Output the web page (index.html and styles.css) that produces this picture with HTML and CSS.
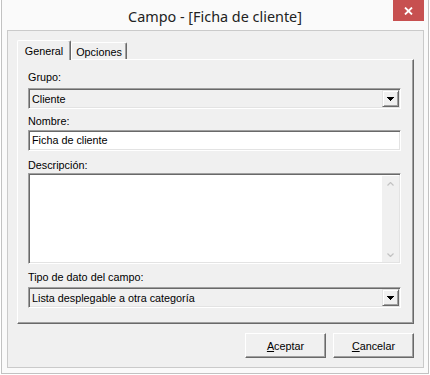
FILE: index.html
```html
<!DOCTYPE html>
<html lang="es">
<head>
  <meta charset="UTF-8" />
  <title>Campo - [Ficha de cliente]</title>
  <link rel="stylesheet" href="styles.css">
</head>
<body>

  <div class="window">
    <div class="titlebar">
      <span class="title">Campo - [Ficha de cliente]</span>
      <span class="close">
        <svg width="9" height="8" viewBox="0 0 9 8"><path d="M1 0.5 L8 7.5 M8 0.5 L1 7.5" stroke="#fff" stroke-width="1.8"/></svg>
      </span>
    </div>

    <div class="client">
      <div class="tabs">
        <div class="tab active">General</div>
        <div class="tab">Opciones</div>
      </div>

      <div class="panel">
        <label class="lbl lbl-grupo">Grupo:</label>
        <div class="combo">
          <span class="value">Cliente</span>
          <span class="drop"><svg width="7" height="4" viewBox="0 0 7 4"><path d="M0 0h7v1H0zM1 1h5v1H1zM2 2h3v1H2zM3 3h1v1H3z" fill="#000"/></svg></span>
        </div>

        <label class="lbl lbl-nombre">Nombre:</label>
        <div class="edit">Ficha de cliente</div>

        <label class="lbl lbl-desc">Descripción:</label>
        <div class="memo">
          <div class="scroll">
            <svg width="7" height="4" viewBox="0 0 7 4"><path d="M0.5 3.5 L3.5 0.5 L6.5 3.5" fill="none" stroke="#c2c2c2" stroke-width="1.2"/></svg>
            <svg width="7" height="4" viewBox="0 0 7 4"><path d="M0.5 0.5 L3.5 3.5 L6.5 0.5" fill="none" stroke="#c2c2c2" stroke-width="1.2"/></svg>
          </div>
        </div>

        <label class="lbl lbl-tipo">Tipo de dato del campo:</label>
        <div class="combo">
          <span class="value">Lista desplegable a otra categoría</span>
          <span class="drop"><svg width="7" height="4" viewBox="0 0 7 4"><path d="M0 0h7v1H0zM1 1h5v1H1zM2 2h3v1H2zM3 3h1v1H3z" fill="#000"/></svg></span>
        </div>
      </div>

      <div class="actions">
        <button class="btn" type="button"><u>A</u>ceptar</button>
        <button class="btn" type="button"><u>C</u>ancelar</button>
      </div>
    </div>
  </div>

</body>
</html>
```

FILE: styles.css
```css
body {
  margin: 0;
  background: #fff;
  font-family: "Liberation Sans", Arial, sans-serif;
  font-size: 10.8px;
  color: #000;
}

.window {
  box-sizing: border-box;
  width: 428px;
  height: 374px;
  margin-left: 1px;
  border: 1px solid #c2c2c2;
  border-top: none;
  background: #fafafa;
}

.titlebar {
  display: grid;
  grid-template-columns: 35px 1fr 31px;
  height: 30px;
  padding-right: 4px;
}

.title {
  grid-column: 2;
  align-self: center;
  text-align: center;
  padding-top: 2px;
  font-family: "Noto Sans", sans-serif;
  font-size: 14.4px;
  color: #222;
}

.close {
  grid-column: 3;
  height: 21px;
  background: #c75050;
  display: flex;
  align-items: center;
  justify-content: center;
}

.client {
  box-sizing: border-box;
  height: 338px;
  margin: 0 4px 5px 5px;
  padding: 9px 9px 9px 9px;
  border: 1px solid #cacaca;
  background: #f0f0f0;
  display: flex;
  flex-direction: column;
}

/* tabs */
.tabs {
  display: flex;
  align-items: flex-end;
  height: 19px;
  position: relative;
  z-index: 1;
}

.tab {
  box-sizing: border-box;
  height: 17px;
  width: 56px;
  padding-top: 3px;
  text-align: center;
  background: #f0f0f0;
  border: 1px solid;
  border-color: #fff #696969 transparent #fff;
  border-bottom: none;
  border-radius: 2px 2px 0 0;
  box-shadow: inset -1px 0 0 #a0a0a0;
}

.tab.active {
  height: 20px;
  width: 54px;
  margin-bottom: -1px;
  padding-top: 4px;
}

.panel {
  box-sizing: border-box;
  height: 265px;
  padding: 11px 11px 0 10px;
  border: 1px solid;
  border-color: #fff #696969 #696969 #fff;
  box-shadow: inset -1px -1px 0 #a0a0a0;
}

/* labels and controls */
.lbl {
  display: block;
  line-height: 13px;
}

.lbl-grupo { margin-bottom: 4px; }
.lbl-nombre { margin-top: 6px; margin-bottom: 2px; }
.lbl-desc { margin-top: 8px; margin-bottom: 1px; }
.lbl-tipo { margin-top: 7px; margin-bottom: 3px; }

.combo, .edit, .memo {
  box-sizing: border-box;
  width: 373px;
  border: 1px solid;
  border-color: #a0a0a0 #fff #fff #a0a0a0;
  box-shadow: inset 1px 1px 0 #696969, inset -1px -1px 0 #e3e3e3;
}

.combo {
  height: 21px;
  display: flex;
  align-items: center;
  padding: 1px 1px 1px 3px;
  background: #f0f0f0;
}

.combo .value {
  flex: 1;
}

.drop {
  box-sizing: border-box;
  width: 17px;
  height: 17px;
  display: flex;
  align-items: center;
  justify-content: center;
  background: #f0f0f0;
  border: 1px solid;
  border-color: #e3e3e3 #696969 #696969 #e3e3e3;
  box-shadow: inset 1px 1px 0 #fff, inset -1px -1px 0 #a0a0a0;
}

.edit {
  height: 21px;
  line-height: 19px;
  padding-left: 3px;
  background: #fff;
}

.memo {
  height: 91px;
  background: #fff;
  display: flex;
  justify-content: flex-end;
  padding: 2px 1px 1px 2px;
}

.scroll {
  width: 17px;
  background: #f0f0f0;
  display: flex;
  flex-direction: column;
  align-items: center;
  justify-content: space-between;
  padding: 6px 0 5px;
}

/* buttons */
.actions {
  display: flex;
  justify-content: flex-end;
  gap: 7px;
  margin-top: 9px;
}

.btn {
  box-sizing: border-box;
  width: 81px;
  height: 25px;
  padding: 0;
  font-family: "Liberation Sans", Arial, sans-serif;
  font-size: 10.8px;
  color: #000;
  background: #f0f0f0;
  border: 1px solid;
  border-color: #fff #696969 #696969 #fff;
  box-shadow: inset -1px -1px 0 #a0a0a0;
}
```
